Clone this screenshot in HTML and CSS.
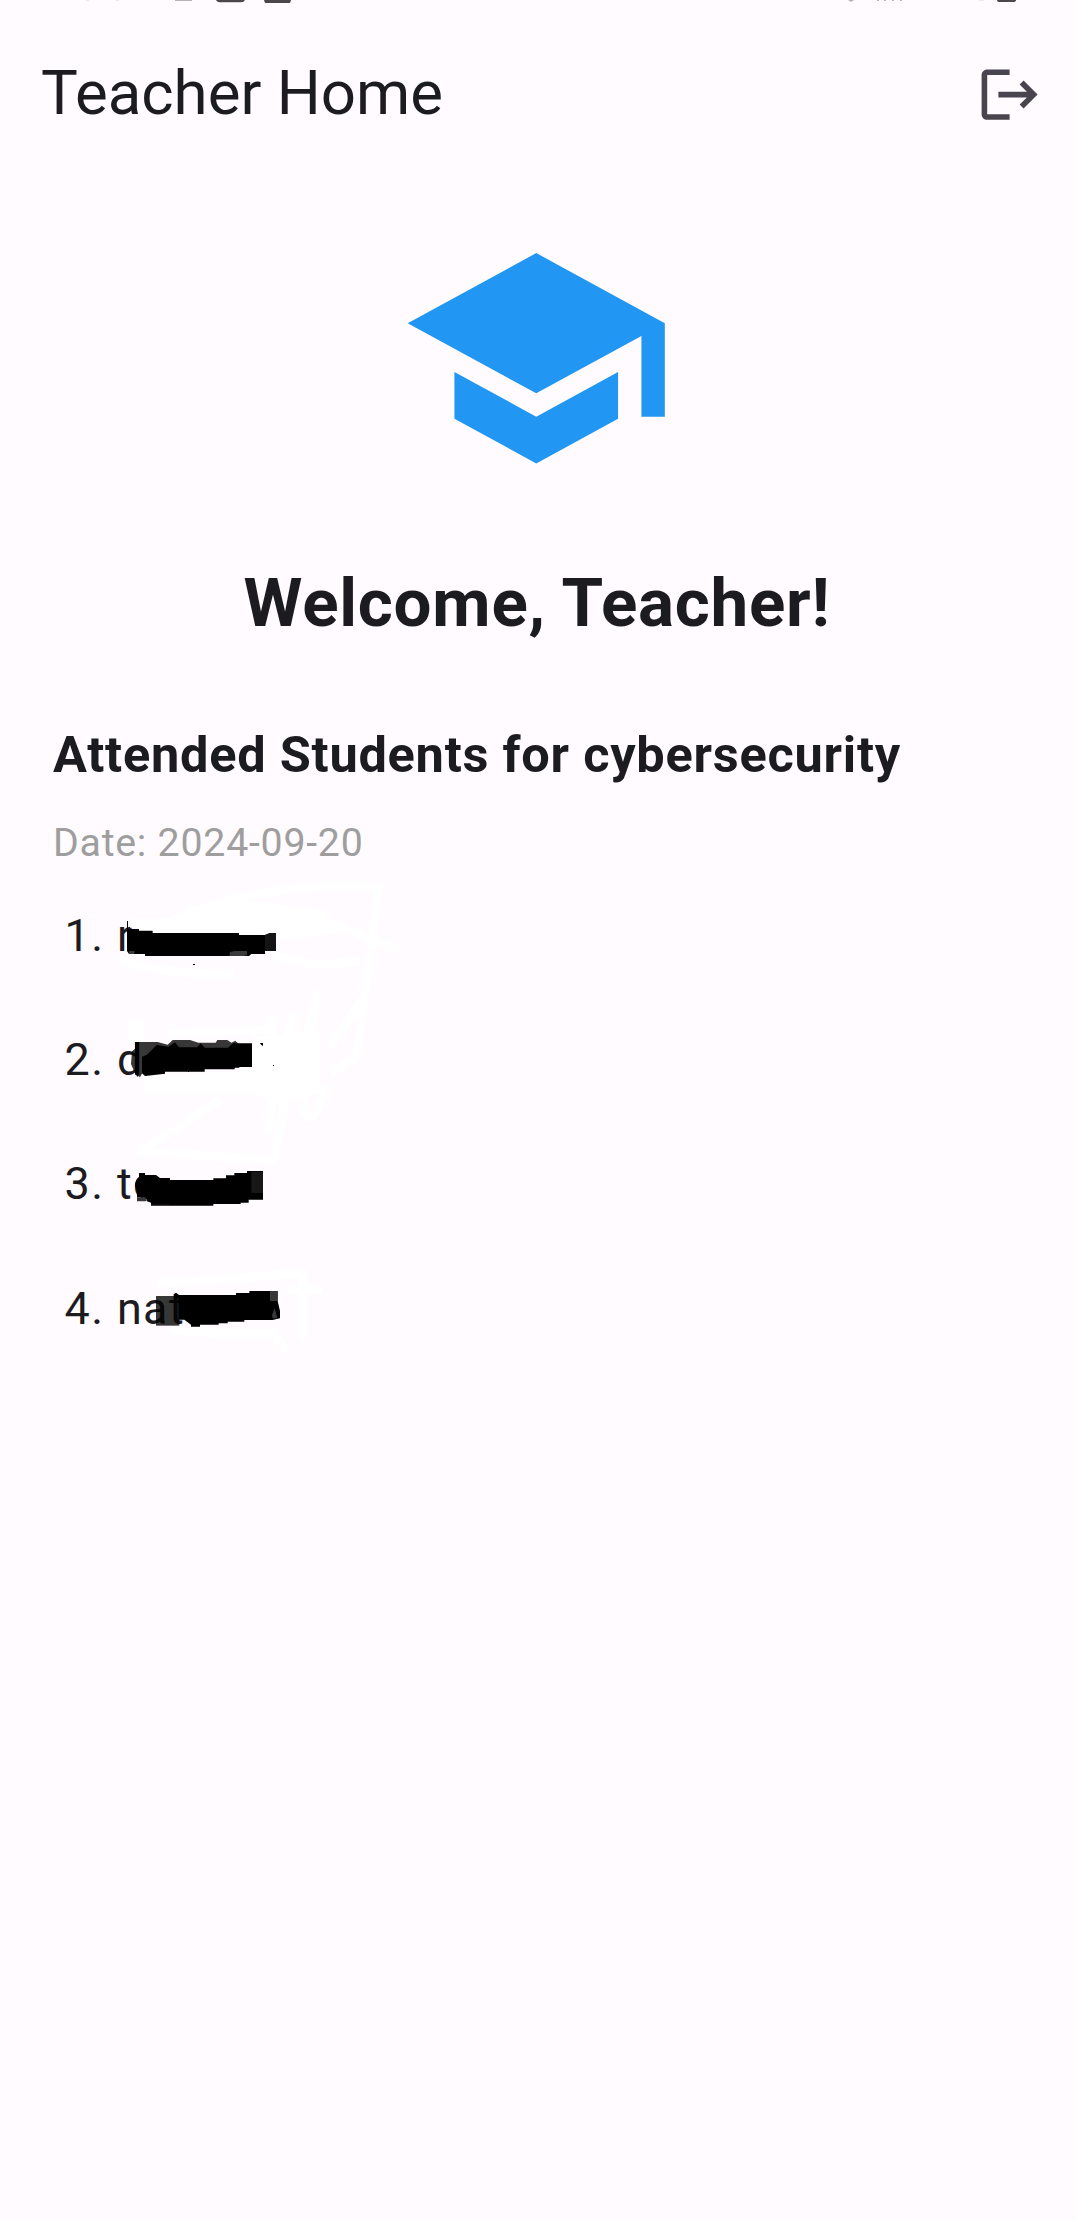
FILE: index.html
```html
<!DOCTYPE html>
<html lang="en">
<head>
<meta charset="utf-8">
<title>Teacher Home</title>
<link rel="stylesheet" href="styles.css">
</head>
<body>
<div class="status">
  <svg width="1076" height="6" viewBox="0 0 1076 6">
    <path fill="#4b474b" d="M216 0h29q-1 2.300-4 2.300h-20q-4 0-5-2.300zM264 0h27l-1 3h-25zM997 0h19q0 2-3 2h-13q-3 0-3-2z"/>
    <path fill="#b5b2b6" d="M175 0h17v1h-17zM848 0h6l-3 2zM877 0h2v1h-2zM884 0h2v1h-2zM892 0h2v1h-2zM900 0h2v1h-2z"/>
    <path fill="#ece8ec" d="M86 0h3v1h-3zM116 0h3v1h-3zM979 0h5v1h-5z"/>
  </svg>
</div>
<header class="appbar">
  <h1 class="appbar-title">Teacher Home</h1>
  <button class="logout" aria-label="Log out">
    <svg viewBox="0 0 24 24"><path d="M17 7l-1.410 1.410L18.170 11H8v2h10.170l-2.580 2.580L17 17l5-5zM4 5h8V3H4c-1.100 0-2 .9-2 2v14c0 1.100.9 2 2 2h8v-2H4z"/></svg>
  </button>
</header>
<main class="content">
  <svg class="school" viewBox="0 0 24 24"><path d="M5 13.180v4L12 21l7-3.820v-4L12 17zM12 3L1 9l11 6 9-4.910V17h2V9z"/></svg>
  <h2 class="welcome">Welcome, Teacher!</h2>
  <h3 class="subject">Attended Students for cybersecurity</h3>
  <p class="date">Date: 2024-09-20</p>
  <div class="students">
    <ol class="list">
      <li>1. r</li>
      <li>2. d</li>
      <li>3. te</li>
      <li>4. nat</li>
    </ol>
    <svg class="marks" viewBox="0 0 1140 1560">
      <g fill="none" stroke="#fff" stroke-width="26" stroke-linejoin="round">
        <path d="M400 180Q600 90 850 80L1015 80L985 330L950 590L870 640"/>
        <path d="M270 190H700L880 190L1075 270M240 300Q400 350 580 340M700 285L800 310Q900 315 960 300"/>
        <path d="M380 520L680 510L700 470V650L760 470V690L830 400L790 770M980 400L870 560"/>
        <path d="M310 690H860L820 770H790M700 700L685 820M740 700L700 910M540 720L300 875L700 900"/>
        <path d="M350 1270L790 1240V1440M390 1410L550 1420H700L745 1480M740 1290H850"/>
      </g>
      <path fill="#fff" d="M400 180L600 120L860 150L900 220L720 240V220H340L270 200zM264 480h50v66h-50zM636 530L840 520V690L720 740L640 700H310V650L640 630z"/>
      <path d="M261 183h3v24h33v5h41v7h259v6h78l15-6h18v54h-33v9h-41l-7 6H315v-6h-48l-6-9zM459 312h6v3h-6z"/>
      <path fill="#3a3a3a" d="M570 276l15-3h36v12l-10 3h-43zM267 273h16v9h-16z"/>
      <path fill="#141414" d="M675 225l15-6h18v54h-33z"/>
      <path fill-opacity=".78" d="M285 546h68l30 8 15-14h52l25 8h52l5-8h30l12 8 12-6 12 12v70H315l-15 28-15-12-12-28 3-38 9-8z"/>
      <path d="M285 546h12v45l-3 60-9-9v-35zM306 590l14-5 30-30 35 5 20-13 12 15h55l10-12 12 13h70l15-13h57v71h-52v7h-90v7H375v6l-60 7-9-8zM660 549h9v9l-6-4zM699 615h3v3h-3zM444 632h3v4h-3z"/>
      <path d="M297 939h18v6h33l12 9h30v6h130v-5h38v-9h25v-7h38v-6h48v86h-43v9h-24v4H520v5H333v-9l-12-4-4-12h-26v-15l-6-20q0-18 12-26z"/>
      <path fill="#171717" d="M634 935h35v64h-35z"/>
      <path fill="#383838" d="M291 1012h24l5 12h-29zM333 1034h55l10 2h-65z"/>
      <path fill-opacity=".78" d="M348 1308h70v89h-70z"/>
      <path d="M402 1302l6-4 9 7h171v-6h40v-6h85v30l7 30v22l-22 5h-85v5h-50v5h-27v4h-56v6h-27v-6l-20-15h-18V1315h-13z"/>
      <path fill="#383838" d="M690 1293h23v30h-23zM696 1365l8-20 8 30h-14z"/>
    </svg>
  </div>
</main>
</body>
</html>
```
FILE: styles.css
```css
* { box-sizing: border-box; margin: 0; padding: 0; }
body {
  min-height: 2221px;
  background: #fffbff;
  color: #1c1b1f;
  font-family: Roboto, "Liberation Sans", sans-serif;
}
.status { height: 6px; }
.status svg { display: block; }
.appbar {
  display: flex;
  align-items: center;
  justify-content: space-between;
  height: 144px;
  margin-top: 16px;
  padding: 2px 33px 0 41px;
}
.appbar-title { font-size: 61.8px; font-weight: 400; line-height: 72px; padding-bottom: 5px; }
.logout { width: 67.2px; height: 67.2px; border: 0; background: none; }
.logout svg { display: block; width: 100%; height: 100%; fill: #49454f; }
.content { display: flex; flex-direction: column; padding: 52px 53px 0; }
.school { display: block; width: 280.5px; height: 280.5px; margin-left: 343px; fill: #2196f3; }
.welcome { margin-top: 64px; padding-right: 2px; font-size: 67.3px; line-height: 80px; letter-spacing: .75px; text-align: center; }
.subject { margin-top: 82.5px; font-size: 50.5px; line-height: 60px; letter-spacing: .75px; white-space: nowrap; }
.date { margin-top: 34.5px; font-size: 39.3px; line-height: 46px; letter-spacing: .75px; color: #9e9e9e; }
.students { position: relative; margin-top: 8.5px; }
.list { list-style: none; padding-left: 11.5px; }
.list li { height: 124.2px; font-size: 44.9px; line-height: 124.2px; letter-spacing: 1.4px; }
.marks { position: absolute; left: -13px; top: -14px; width: 380px; height: 520px; }
```
